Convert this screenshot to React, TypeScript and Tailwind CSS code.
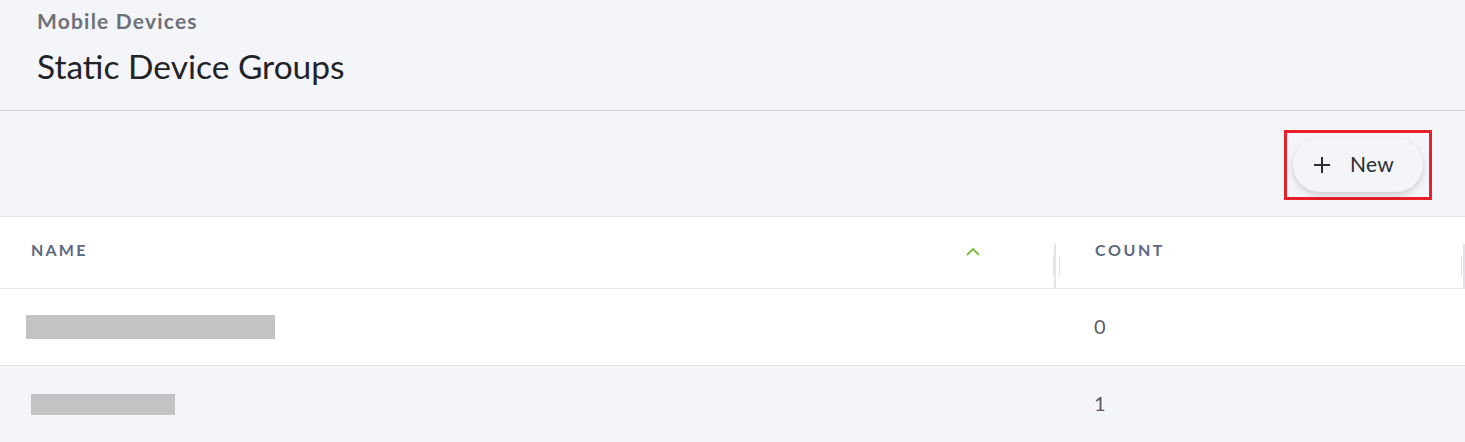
import React from "react";

const rows = [
  { nameWidth: "w-[249px]", nameIndent: "pl-[26px]", nameHeight: "h-[24px]", count: 0, bg: "bg-white" },
  { nameWidth: "w-[144px]", nameIndent: "pl-[31px]", nameHeight: "h-[21px]", count: 1, bg: "bg-[#f4f5f9]" },
];

const ResizeHandle = () => (
  <div className="flex h-full items-end">
    <div className="mb-[12px] h-[20px] w-px bg-[#e3e5ea]" />
  </div>
);

export default function App() {
  return (
    <div className="w-[1465px] h-[442px] overflow-hidden bg-[#f4f5f9] font-['Lato',sans-serif]">
      {/* page header */}
      <header className="h-[111px] border-b border-[#d3d4d8] pl-[37px] pt-[8px]">
        <p className="text-[21px] font-bold tracking-[1.2px] text-[#6e7077] leading-[26px]">Mobile Devices</p>
        <h1 className="mt-[12px] text-[33.5px] text-[#222329] leading-[40px]">Static Device Groups</h1>
      </header>

      {/* toolbar */}
      <div className="flex h-[106px] items-start justify-end border-b border-[#e1e2e6] pr-[33px] pt-[19px]">
        <div className="border-[3px] border-[#e8202a] px-[6px] py-[5px]">
          <button className="flex h-[54px] w-[130px] items-center gap-[20px] rounded-full bg-[#f4f5f9] pl-[21px] text-[21px] tracking-[0.3px] text-[#2c2d33] shadow-[0_3px_6px_rgba(0,0,0,0.16)]">
            <svg width="16" height="16" viewBox="0 0 16 16" className="stroke-[#2c2d33]" strokeWidth="2">
              <path d="M8 0v16M0 8h16" />
            </svg>
            <span className="mt-[-2px]">New</span>
          </button>
        </div>
      </div>

      {/* table */}
      <div className="bg-white">
        <div className="flex h-[72px] border-b border-[#e3e5ea]">
          <div className="flex w-[1054px] items-center justify-between pl-[31px]">
            <span className="text-[16px] font-bold tracking-[2.2px] text-[#5c6882] mt-[-6px]">NAME</span>
            <div className="flex h-full items-center">
              <svg width="16" height="10" viewBox="0 0 16 10" className="mr-[72px] mt-[-2px]" fill="none" stroke="#7cc04a" strokeWidth="2">
                <path d="M2 8l6-6 6 6" />
              </svg>
              <ResizeHandle />
            </div>
          </div>
          <div className="h-[44px] w-[2px] bg-[#e3e5ea] self-end" />
          <div className="flex flex-1 items-center justify-between">
            <div className="flex h-full items-center">
              <div className="ml-[3px] h-full">
                <ResizeHandle />
              </div>
              <span className="ml-[35px] text-[16px] font-bold tracking-[2.6px] text-[#5c6882] mt-[-6px]">COUNT</span>
            </div>
            <div className="flex h-full">
              <ResizeHandle />
              <div className="ml-[1px] h-[44px] w-[2px] bg-[#e3e5ea] self-end" />
            </div>
          </div>
        </div>

        {rows.map((row, i) => (
          <div key={i} className={`flex h-[77px] items-center border-b border-[#e3e5ea] ${row.bg}`}>
            <div className={`w-[1056px] ${row.nameIndent}`}>
              <div className={`${row.nameWidth} ${row.nameHeight} bg-[#c3c3c3]`} />
            </div>
            <span className="pl-[38px] text-[20px] text-[#5a5c63] mt-[-3px]">{row.count}</span>
          </div>
        ))}
      </div>
    </div>
  );
}
